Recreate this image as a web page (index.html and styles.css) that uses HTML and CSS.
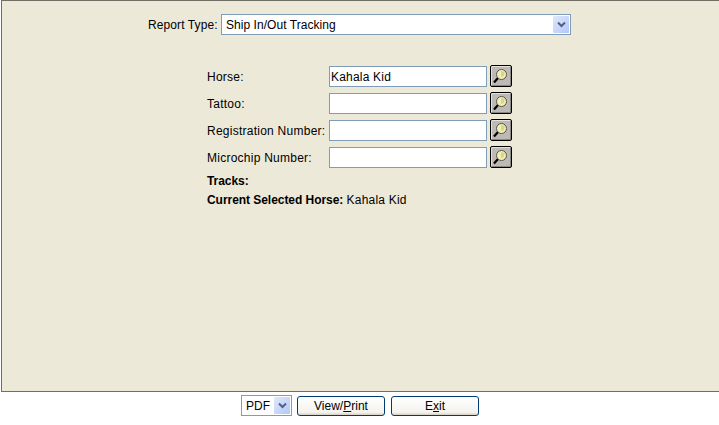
FILE: index.html
```html
<!DOCTYPE html>
<html lang="en">

<head>
    <title>Report</title>
    <link rel="stylesheet" href="styles.css">
</head>

<body>
    <div class="panel">
        <div class="report-row">
            <span class="report-label">Report Type:</span>
            <div class="combo combo-wide">
                <span class="combo-text">Ship In/Out Tracking</span>
                <span class="combo-arrow">
                    <svg width="9" height="7" viewBox="0 0 9 7"><path d="M1 1.5 L4.5 5 L8 1.5" fill="none" stroke="#4d6185" stroke-width="2"/></svg>
                </span>
            </div>
        </div>

        <div class="fields">
            <div class="field-row">
                <label class="field-label">Horse:</label>
                <input class="field-input" type="text" value="Kahala Kid">
                <button class="lookup-btn"><svg width="20" height="20" viewBox="0 0 20 20"><use href="#lens"/></svg></button>
            </div>
            <div class="field-row">
                <label class="field-label">Tattoo:</label>
                <input class="field-input" type="text">
                <button class="lookup-btn"><svg width="20" height="20" viewBox="0 0 20 20"><use href="#lens"/></svg></button>
            </div>
            <div class="field-row">
                <label class="field-label">Registration Number:</label>
                <input class="field-input" type="text">
                <button class="lookup-btn"><svg width="20" height="20" viewBox="0 0 20 20"><use href="#lens"/></svg></button>
            </div>
            <div class="field-row">
                <label class="field-label">Microchip Number:</label>
                <input class="field-input" type="text">
                <button class="lookup-btn"><svg width="20" height="20" viewBox="0 0 20 20"><use href="#lens"/></svg></button>
            </div>
            <div class="info-row tracks-row"><b>Tracks:</b></div>
            <div class="info-row"><b>Current Selected Horse:</b> <span class="horse-name">Kahala Kid</span></div>
        </div>
    </div>

    <div class="footer">
        <div class="combo combo-small">
            <span class="combo-text">PDF</span>
            <span class="combo-arrow">
                <svg width="9" height="7" viewBox="0 0 9 7"><path d="M1 1.5 L4.5 5 L8 1.5" fill="none" stroke="#4d6185" stroke-width="2"/></svg>
            </span>
        </div>
        <button class="action-btn">View/<u>P</u>rint</button>
        <button class="action-btn">E<u>x</u>it</button>
    </div>

    <svg class="defs" width="0" height="0">
        <defs>
            <g id="lens">
                <circle cx="10.5" cy="8.5" r="5" fill="#f3eeb4" stroke="#55554c" stroke-width="1"/>
                <path d="M10 5 L13.5 6 L13 10 L10 11 Z" fill="#d6d68c"/>
                <path d="M6.8 12.2 L3 16.5" stroke="#000" stroke-width="2.2" fill="none"/>
            </g>
        </defs>
    </svg>
</body>

</html>
```

FILE: styles.css
```css
html,
body {
    margin: 0;
    padding: 0;
}

body {
    width: 719px;
    height: 425px;
    overflow: hidden;
    background-color: #fff;
    font-family: "Liberation Sans", Arial, sans-serif;
    font-size: 12px;
    color: #000;
}

.panel {
    box-sizing: border-box;
    height: 392px;
    margin-left: 1px;
    border-top: 1px solid #716f64;
    border-left: 1px solid #716f64;
    border-bottom: 1px solid #716f64;
    background-color: #ece9d8;
}

.report-row {
    display: flex;
    align-items: center;
    padding: 13px 0 0 146px;
}

.report-label {
    width: 73px;
    letter-spacing: 0.1px;
}

.combo {
    display: flex;
    align-items: center;
    box-sizing: border-box;
    height: 21px;
    border: 1px solid #7f9db9;
    background-color: #fff;
    padding-right: 1px;
}

.combo-wide {
    width: 350px;
}

.combo-small {
    width: 51px;
    margin-right: -1px;
}

.combo-text {
    flex: 1;
    padding-left: 4px;
    letter-spacing: 0.05px;
}

.combo-arrow {
    display: flex;
    align-items: center;
    justify-content: center;
    width: 16px;
    height: 17px;
    border-radius: 1px;
    background: linear-gradient(135deg, #dfe8fd, #b4c8f6);
}

.fields {
    padding: 28px 0 0 205px;
}

.field-row {
    display: flex;
    align-items: center;
    height: 27px;
}

.field-label {
    width: 122px;
    white-space: nowrap;
    letter-spacing: 0.25px;
}

.field-input {
    box-sizing: border-box;
    width: 158px;
    height: 21px;
    margin: 0;
    padding: 1px 1px;
    border: 1px solid #7f9db9;
    background-color: #fff;
    font-family: inherit;
    font-size: 12px;
    letter-spacing: 0.2px;
    outline: none;
}

.lookup-btn {
    display: flex;
    align-items: center;
    justify-content: center;
    box-sizing: border-box;
    width: 22px;
    height: 22px;
    margin: 0 0 1px 3px;
    padding: 0;
    border: 1px solid #000;
    border-radius: 2px;
    background-color: #bdb9b5;
    box-shadow: inset 1px 1px 0 #e6e3df, inset -1px -1px 0 #8a8784;
}

.info-row {
    height: 19px;
    line-height: 19px;
}

.info-row b {
    letter-spacing: -0.05px;
}

.horse-name {
    letter-spacing: 0.2px;
}

.tracks-row {
    margin-top: 1px;
}

.footer {
    display: flex;
    justify-content: center;
    align-items: center;
    gap: 6px;
    padding: 3px 0 0 1px;
}

.action-btn {
    box-sizing: border-box;
    width: 88px;
    height: 20px;
    padding: 0;
    border: 1px solid #003c74;
    border-radius: 3px;
    background: linear-gradient(#fff, #f4f3ee 85%, #d6d0c5);
    font-family: inherit;
    font-size: 12px;
    color: #000;
}

.defs {
    position: absolute;
}
```
